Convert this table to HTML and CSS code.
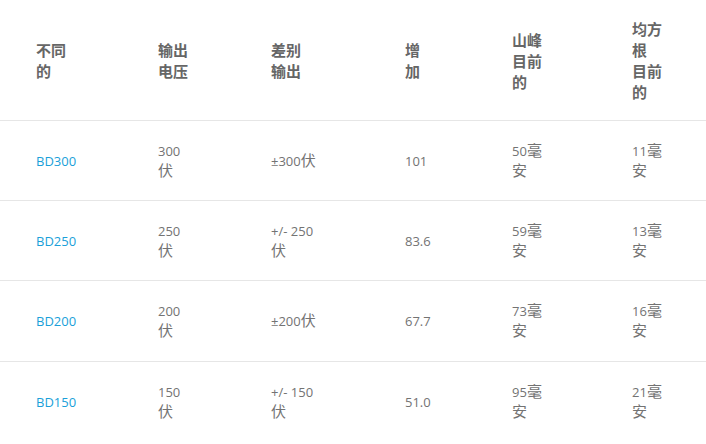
FILE: index.html
```html
<!DOCTYPE html>
<html lang="zh">
<head>
<meta charset="utf-8">
<title>Table</title>
<link rel="stylesheet" href="styles.css">
</head>
<body>
<table class="spec">
  <colgroup>
    <col class="w1"><col class="w2"><col class="w3"><col class="w4"><col class="w5"><col class="w6">
  </colgroup>
  <thead>
    <tr>
      <th>不同的</th>
      <th>输出 电压</th>
      <th>差别 输出</th>
      <th>增加</th>
      <th>山峰 目前的</th>
      <th>均方根 目前的</th>
    </tr>
  </thead>
  <tbody>
    <tr>
      <td><a href="#" class="link">BD300</a></td>
      <td>300<span class="c">伏</span></td>
      <td>±300<span class="c">伏</span></td>
      <td>101</td>
      <td>50<span class="c">毫安</span></td>
      <td>11<span class="c">毫安</span></td>
    </tr>
    <tr>
      <td><a href="#" class="link">BD250</a></td>
      <td>250<span class="c">伏</span></td>
      <td>+/- 250<span class="c">伏</span></td>
      <td>83.6</td>
      <td>59<span class="c">毫安</span></td>
      <td>13<span class="c">毫安</span></td>
    </tr>
    <tr>
      <td><a href="#" class="link">BD200</a></td>
      <td>200<span class="c">伏</span></td>
      <td>±200<span class="c">伏</span></td>
      <td>67.7</td>
      <td>73<span class="c">毫安</span></td>
      <td>16<span class="c">毫安</span></td>
    </tr>
    <tr>
      <td><a href="#" class="link">BD150</a></td>
      <td>150<span class="c">伏</span></td>
      <td>+/- 150<span class="c">伏</span></td>
      <td>51.0</td>
      <td>95<span class="c">毫安</span></td>
      <td>21<span class="c">毫安</span></td>
    </tr>
  </tbody>
</table>
</body>
</html>
```
FILE: styles.css
```css
html, body {
  margin: 0;
  padding: 0;
  background: #ffffff;
  overflow: hidden;
}

body {
  font-family: "Open Sans", "Noto Sans CJK SC", sans-serif;
  font-size: 13px;
  color: #737373;
}

.spec {
  width: 706px;
  table-layout: fixed;
  border-collapse: collapse;
}

.w1 { width: 158px; }
.w2 { width: 113px; }
.w3 { width: 134px; }
.w4 { width: 107px; }
.w5 { width: 120px; }
.w6 { width: 74px; }

.spec th {
  font-family: "Noto Sans CJK SC", sans-serif;
  font-size: 15px;
  font-weight: 700;
  color: #666666;
  line-height: 21px;
  text-align: left;
  vertical-align: middle;
  padding-top: 18px;
  padding-bottom: 17.5px;
  border-bottom: 1px solid #e6e6e6;
}

.spec td {
  line-height: 20px;
  text-align: left;
  vertical-align: middle;
  padding-top: 20px;
  padding-bottom: 19.4px;
  border-bottom: 1px solid #e6e6e6;
}

.spec tbody tr:last-child td {
  border-bottom: none;
}

.spec th:nth-child(1), .spec td:nth-child(1) { padding-left: 36px; padding-right: 90px; }
.spec th:nth-child(2), .spec td:nth-child(2) { padding-left: 0; padding-right: 81px; }
.spec td:nth-child(3) { padding-left: 0; padding-right: 84px; }
.spec th:nth-child(3) { padding-left: 0; padding-right: 100px; }
.spec th:nth-child(4), .spec td:nth-child(4) { padding-left: 0; padding-right: 87px; }
.spec th:nth-child(5), .spec td:nth-child(5) { padding-left: 0; padding-right: 87px; }
.spec th:nth-child(6), .spec td:nth-child(6) { padding-left: 0; padding-right: 41px; }

.c {
  font-family: "Noto Sans CJK SC", sans-serif;
  font-size: 15px;
  line-height: 1;
}

.link {
  color: #1a9fd9;
  text-decoration: none;
}
```
